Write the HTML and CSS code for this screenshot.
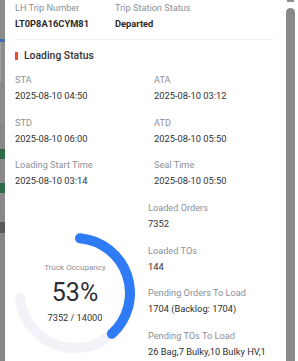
FILE: index.html
```html
<!DOCTYPE html>
<html>
<head>
<meta charset="utf-8">
<link rel="stylesheet" href="styles.css">
</head>
<body>
<div class="screen">
  <div class="backdrop">
    <div class="bd bd-top"></div>
    <div class="bd bd-blue"></div>
    <div class="bd bd-box"></div>
    <div class="bd bd-gap1"></div>
    <div class="bd bd-line"></div>
    <div class="bd bd-gap2"></div>
    <div class="bd bd-green"></div>
    <div class="bd bd-gap3"></div>
    <div class="bd bd-green"></div>
    <div class="bd bd-gap4"></div>
    <div class="bd bd-dark"></div>
    <div class="bd bd-rest"></div>
  </div>
  <div class="panel">
    <div class="header">
      <div class="field">
        <div class="label">LH Trip Number</div>
        <div class="value strong">LT0P8A16CYM81</div>
      </div>
      <div class="field">
        <div class="label">Trip Station Status</div>
        <div class="value strong">Departed</div>
      </div>
    </div>
    <div class="divider"></div>
    <div class="section-title"><span class="title-bar"></span>Loading Status</div>
    <div class="times">
      <div class="field"><div class="label">STA</div><div class="value">2025-08-10 04:50</div></div>
      <div class="field"><div class="label">ATA</div><div class="value">2025-08-10 03:12</div></div>
      <div class="field"><div class="label">STD</div><div class="value">2025-08-10 06:00</div></div>
      <div class="field"><div class="label">ATD</div><div class="value">2025-08-10 05:50</div></div>
      <div class="field"><div class="label">Loading Start Time</div><div class="value">2025-08-10 03:14</div></div>
      <div class="field"><div class="label">Seal Time</div><div class="value">2025-08-10 05:50</div></div>
    </div>
    <div class="stats">
      <div class="gauge-col">
        <div class="gauge">
          <svg width="120" height="120" viewBox="0 0 120 120">
            <path d="M64.98 5.23 A55 55 0 1 1 5.23 64.98" fill="none" stroke="#f1f3f8" stroke-width="10" stroke-linecap="round"/>
            <path d="M64.98 5.23 A55 55 0 0 1 96.87 100.81" fill="none" stroke="#2f7bf6" stroke-width="10" stroke-linecap="round"/>
          </svg>
          <div class="gauge-text">
            <div class="gauge-label">Truck Occupancy</div>
            <div class="gauge-value">53%</div>
            <div class="gauge-sub">7352 / 14000</div>
          </div>
        </div>
      </div>
      <div class="stat-list">
        <div class="field"><div class="label">Loaded Orders</div><div class="value">7352</div></div>
        <div class="field"><div class="label">Loaded TOs</div><div class="value">144</div></div>
        <div class="field"><div class="label">Pending Orders To Load</div><div class="value">1704 (Backlog: 1704)</div></div>
        <div class="field"><div class="label">Pending TOs To Load</div><div class="value">26 Bag,7 Bulky,10 Bulky HV,1 Liquid,2 NA</div></div>
      </div>
    </div>
  </div>
  <div class="scrollbar">
    <div class="scroll-arrow"></div>
    <div class="scroll-thumb"></div>
  </div>
</div>
</body>
</html>
```
FILE: styles.css
```css
* { box-sizing: border-box; }
html, body { margin: 0; padding: 0; background: #fff; }
body {
  font-family: Roboto, "Liberation Sans", Arial, sans-serif;
  color: #333;
}
.screen {
  display: flex;
  width: 298px;
  height: 361px;
  overflow: hidden;
}
.backdrop {
  width: 5px;
  flex: none;
  display: flex;
  flex-direction: column;
  background: #8a8a8a;
}
.bd { width: 100%; flex: none; }
.bd-top { height: 39px; background: #8b8b8b; }
.bd-blue { height: 3px; background: #3f6fae; }
.bd-box { height: 40px; background: #8d8d8d; border-left: 1px solid #a0a0a0; }
.bd-gap1 { height: 39px; background: #8a8a8a; }
.bd-line { height: 1px; background: #9a9a9a; }
.bd-gap2 { height: 27px; background: #888; }
.bd-green { height: 10px; background: #2f6a46; }
.bd-gap3 { height: 24px; background: #888; }
.bd-gap4 { height: 29px; background: #888; }
.bd-dark { height: 11px; background: #595959; }
.bd-rest { flex: 1; background: #878787; }

.panel {
  width: 278px;
  flex: none;
  background: #fff;
  padding: 0 10px;
  overflow: hidden;
}
.field { display: flex; flex-direction: column; }
.label {
  font-size: 9.2px;
  line-height: 16px;
  color: #8c9099;
  white-space: nowrap;
}
.value {
  font-size: 9.3px;
  line-height: 16px;
  color: #303133;
}
.value.strong { font-weight: 700; color: #2b2b2b; }

.header {
  display: grid;
  grid-template-columns: 100px 1fr;
}
.divider {
  height: 1px;
  background: #eceef1;
  margin-top: 7px;
}
.section-title {
  display: flex;
  align-items: center;
  margin-top: 8px;
  font-size: 10.4px;
  font-weight: 500;
  line-height: 16px;
  color: #333;
}
.title-bar {
  width: 3px;
  height: 8px;
  background: #ee4d2d;
  margin-right: 6px;
}
.times {
  display: grid;
  grid-template-columns: 139px 1fr;
  row-gap: 10.5px;
  margin-top: 8px;
}
.stats {
  display: flex;
  margin-top: 11px;
}
.gauge-col {
  width: 133px;
  flex: none;
  padding-top: 33px;
}
.gauge {
  position: relative;
  width: 120px;
  height: 120px;
}
.gauge svg { display: block; }
.gauge-text {
  position: absolute;
  inset: 0;
  display: flex;
  flex-direction: column;
  align-items: center;
  justify-content: center;
}
.gauge-label {
  font-size: 8px;
  line-height: 12px;
  color: #8c9099;
}
.gauge-value {
  font-size: 25px;
  line-height: 26px;
  margin-top: 6px;
  color: #2b2f36;
}
.gauge-sub {
  font-size: 9.2px;
  line-height: 12px;
  margin-top: 6.5px;
  color: #333;
}
.stat-list {
  flex: 1;
  display: grid;
  row-gap: 10.5px;
  align-content: start;
}

.scrollbar {
  flex: 1;
  background: #fff;
  display: flex;
  flex-direction: column;
  align-items: flex-start;
  padding-left: 3px;
}
.scroll-arrow {
  width: 7px;
  height: 2px;
  margin-left: 1px;
  background: #8c8c8c;
}
.scroll-thumb {
  width: 9px;
  margin-top: 6px;
  flex: 1;
  background: #8a8a8a;
  border-radius: 4.5px 4.5px 0 0;
}
```
